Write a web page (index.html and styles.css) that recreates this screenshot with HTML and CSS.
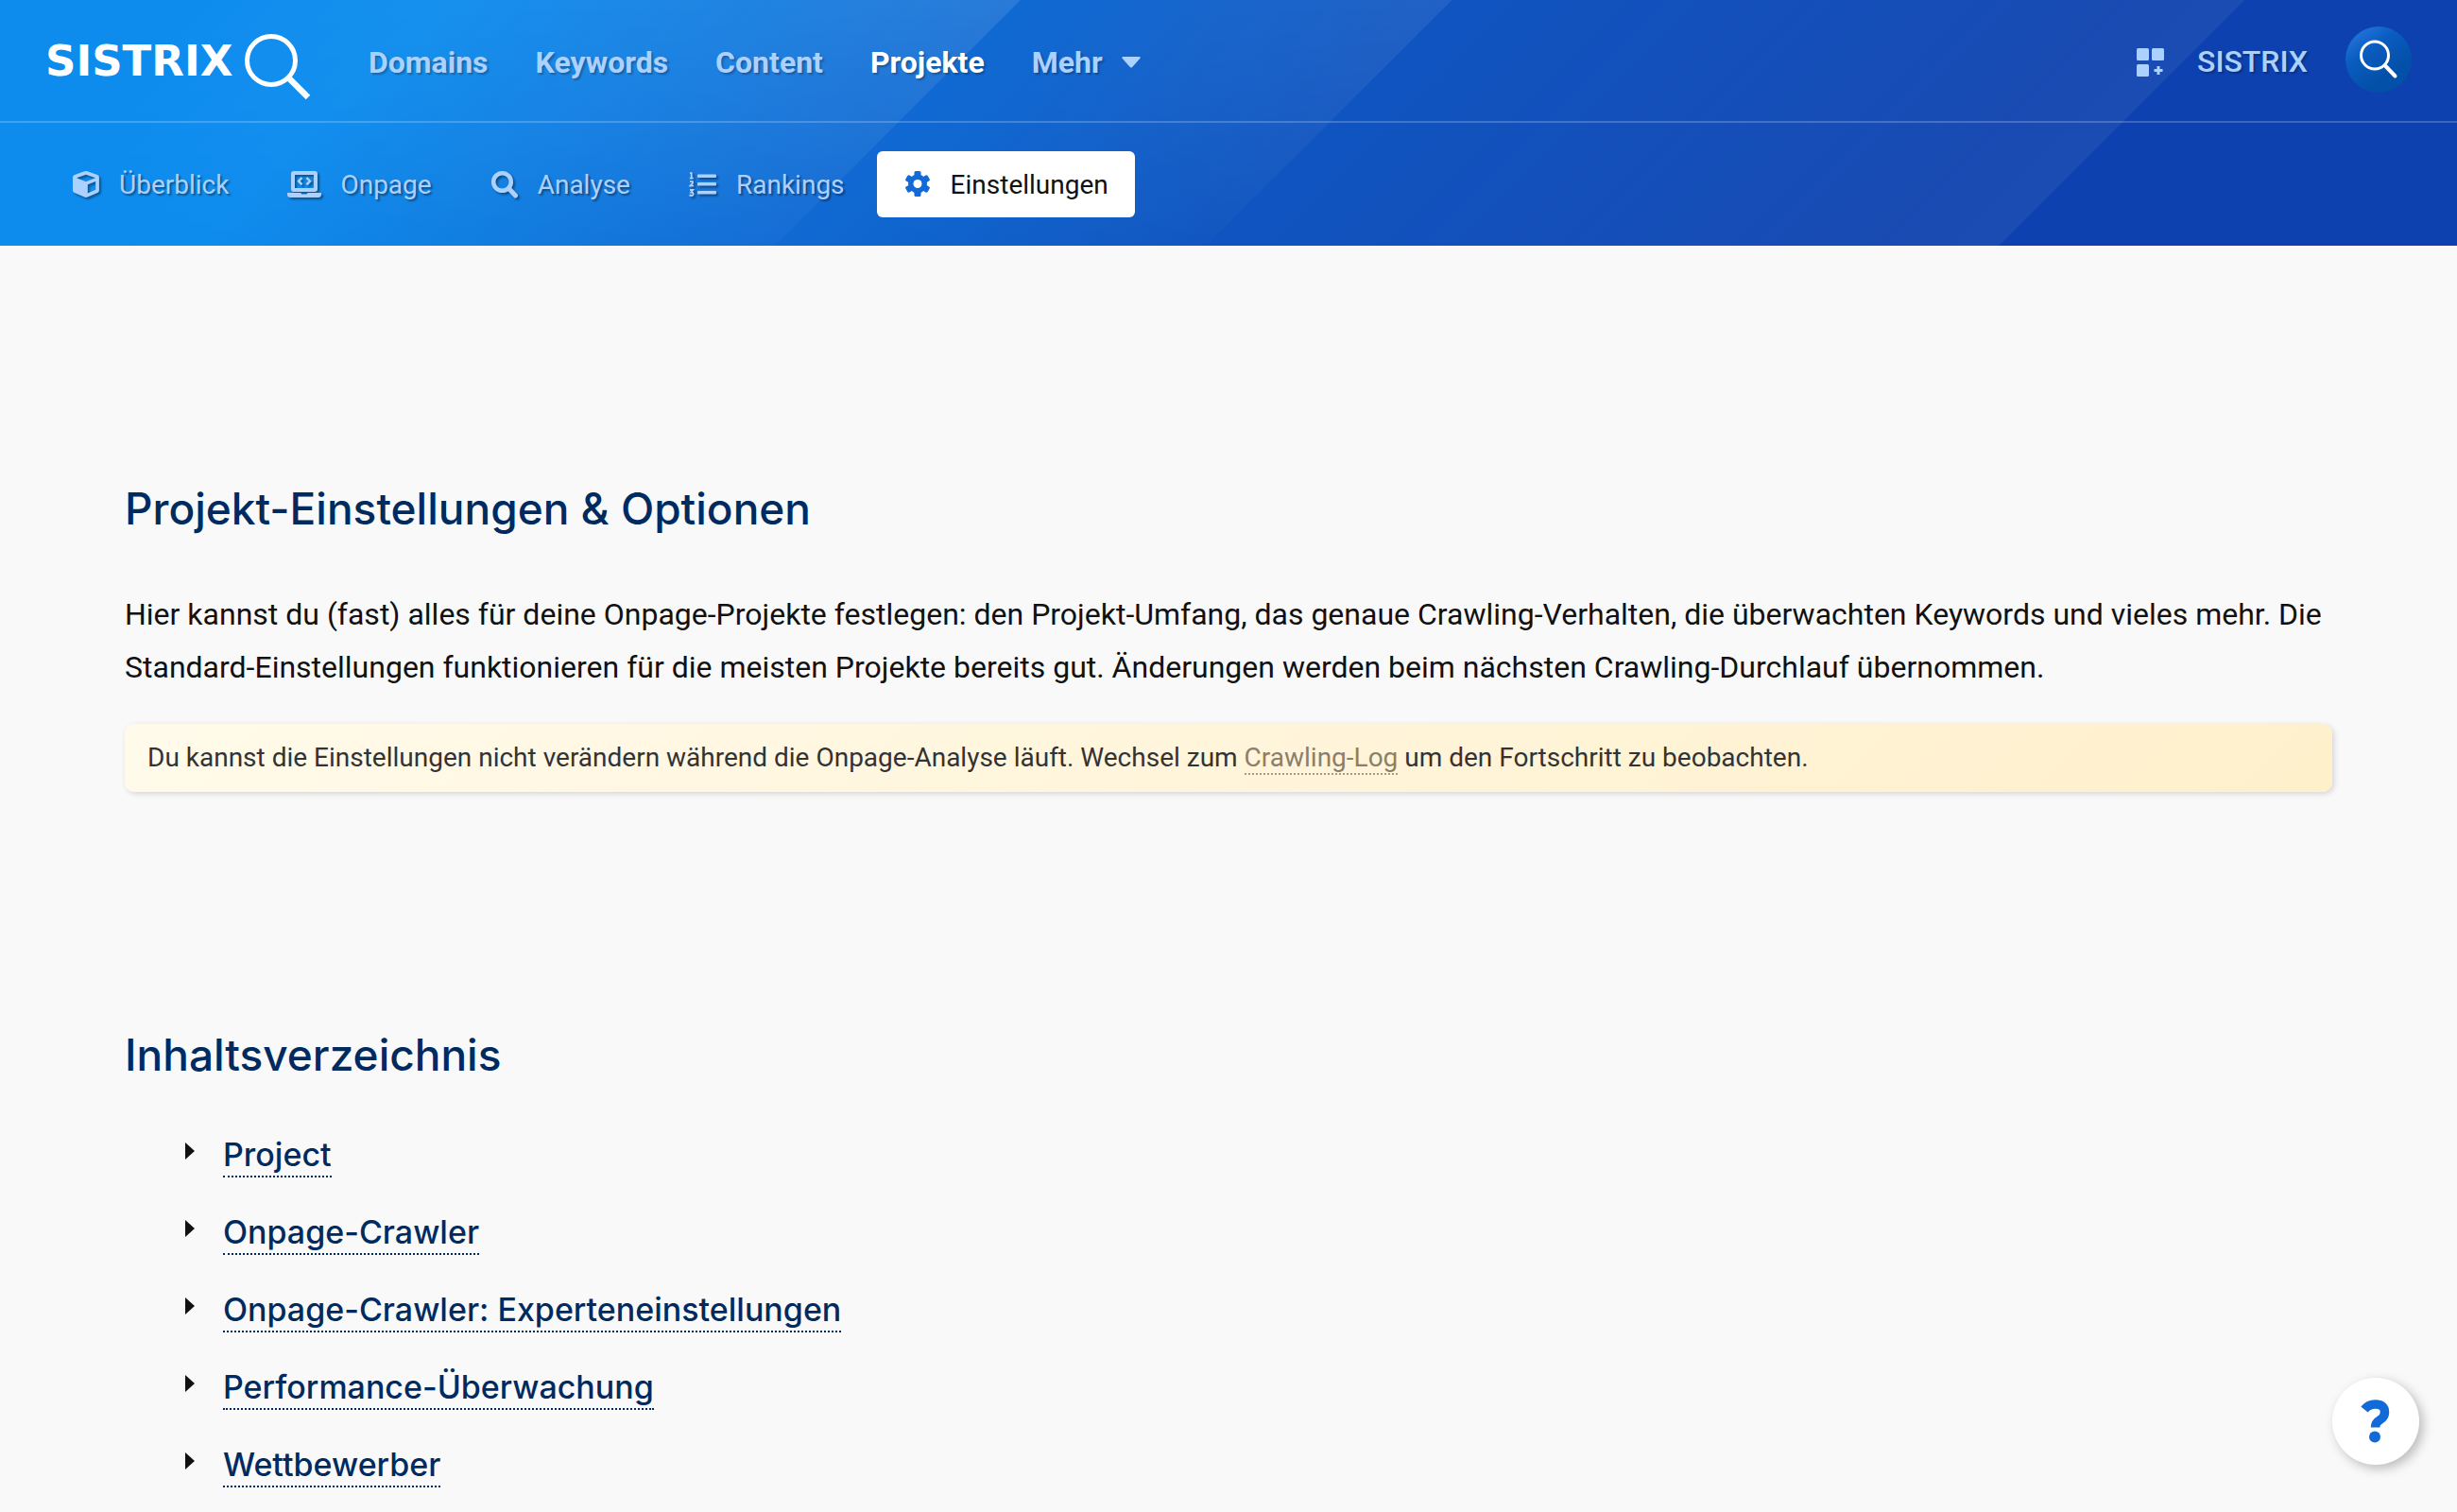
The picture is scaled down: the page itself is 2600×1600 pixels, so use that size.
FILE: index.html
```html
<!DOCTYPE html>
<html lang="de">
<head>
<meta charset="utf-8">
<title>Projekt-Einstellungen – SISTRIX</title>
<link rel="stylesheet" href="styles.css">
</head>
<body>
<header class="header">
  <div class="topbar">
    <a class="logo" href="#" aria-label="SISTRIX">
      <span class="logo-text">SISTRIX</span>
      <svg class="logo-glass" viewBox="0 0 72 72" width="72" height="72"><circle cx="29" cy="29" r="25.500" fill="none" stroke="#fff" stroke-width="5"/><path d="M46.500 46.500 L68 68" stroke="#fff" stroke-width="6.500"/></svg>
    </a>
    <nav class="mainnav">
      <a href="#">Domains</a>
      <a href="#">Keywords</a>
      <a href="#">Content</a>
      <a href="#" class="active">Projekte</a>
      <a href="#" class="more">Mehr <svg class="caret" viewBox="0 0 20 12" width="20" height="12"><path d="M1.500 0h17q2 .3.700 2l-8 9q-1.200 1-2.400 0l-8-9Q-.5.3 1.500 0z" fill="currentColor"/></svg></a>
    </nav>
    <div class="account">
      <button class="icon-button" aria-label="Apps"><svg viewBox="0 0 30 30" width="30" height="30" fill="currentColor"><rect width="13" height="13" rx="1.500"/><rect x="16" width="13" height="13" rx="1.500"/><rect y="17" width="13" height="13" rx="1.500"/><path d="M21.500 19h3v3h3v3h-3v3h-3v-3h-3v-3h3z"/></svg></button>
      <a class="user" href="#">SISTRIX</a>
      <button class="avatar" aria-label="Suche"><svg viewBox="0 0 70 70" width="70" height="70" fill="none" stroke="#fff"><circle cx="31" cy="30.500" r="14.500" stroke-width="3"/><path d="M42 41.500l10.500 11" stroke-width="4" stroke-linecap="round"/></svg></button>
    </div>
  </div>
  <nav class="subnav">
    <a href="#"><svg viewBox="0 0 30 30" width="30" height="30"><path fill="currentColor" fill-rule="evenodd" d="M15 1q.8 0 1.500.3l10.500 3.700q1.900.7 1.900 2.500v14q0 1.700-1.700 2.500l-10.500 4.600q-1.700.7-3.400 0l-10.500-4.600Q1 23.200 1 21.500v-14Q1 5.700 3 5l10.500-3.700Q14.200 1 15 1zM15 4.700L5 8.200v.1L15 12.300l10-4v-.1zM16.800 24.500l8.400-3.700v-8.900l-8.400 3.300z"/></svg>Überblick</a>
    <a href="#"><svg viewBox="0 0 36 30" width="36" height="30"><g fill="none" stroke="currentColor"><rect x="6" y="3" width="24" height="18" rx="1" stroke-width="4"/><path d="M15.500 8l-3.500 3.700 3.500 3.700M20.500 8l3.500 3.700-3.500 3.700" stroke-width="2.500"/></g><path fill="currentColor" d="M0 24h14.500q.3 1.500 1.500 1.500h4q1.200 0 1.500-1.500H36v1.500q0 3.500-3.500 3.500h-29Q0 29 0 25.500z"/></svg>Onpage</a>
    <a href="#"><svg viewBox="0 0 30 30" width="30" height="30"><circle cx="12.500" cy="12.500" r="9.300" fill="none" stroke="currentColor" stroke-width="4.500"/><path d="M19.500 19.500l7 7.500" stroke="currentColor" stroke-width="5" stroke-linecap="round"/></svg>Analyse</a>
    <a href="#"><svg viewBox="0 0 30 30" width="30" height="30"><g fill="currentColor"><rect x="9" y="4.500" width="20" height="3.500" rx="1"/><rect x="9" y="13" width="20" height="3.500" rx="1"/><rect x="9" y="22" width="20" height="3.500" rx="1"/></g><path fill="none" stroke="currentColor" stroke-width="1.800" d="M1 3.200h1.700v5M.8 8.700h4M1 12.200h3v1.500l-2.700 3h3.800M1 21h3.300l-2 2.500q2.300 0 2.300 1.800t-2 1.700q-1.300 0-2-.8"/></svg>Rankings</a>
    <a href="#" class="current"><svg viewBox="0 0 30 30" width="30" height="30"><g fill="currentColor"><rect x="11.500" y="1" width="7" height="27" rx="1.500"/><rect x="11.500" y="1" width="7" height="27" rx="1.500" transform="rotate(60 15 14.500)"/><rect x="11.500" y="1" width="7" height="27" rx="1.500" transform="rotate(120 15 14.500)"/><circle cx="15" cy="14.500" r="10"/></g><circle cx="15" cy="14.500" r="4.500" fill="#fff"/></svg>Einstellungen</a>
  </nav>
</header>
<main class="content">
  <section class="intro">
    <h1>Projekt-Einstellungen &amp; Optionen</h1>
    <p class="lead">Hier kannst du (fast) alles für deine Onpage-Projekte festlegen: den Projekt-Umfang, das genaue Crawling-Verhalten, die überwachten Keywords und vieles mehr. Die Standard-Einstellungen funktionieren für die meisten Projekte bereits gut. Änderungen werden beim nächsten Crawling-Durchlauf übernommen.</p>
    <p class="notice">Du kannst die Einstellungen nicht verändern während die Onpage-Analyse läuft. Wechsel zum <a href="#">Crawling-Log</a> um den Fortschritt zu beobachten.</p>
  </section>
  <section class="toc">
    <h2>Inhaltsverzeichnis</h2>
    <ul>
      <li><a href="#">Project</a></li>
      <li><a href="#">Onpage-Crawler</a></li>
      <li><a href="#">Onpage-Crawler: Experteneinstellungen</a></li>
      <li><a href="#">Performance-Überwachung</a></li>
      <li><a href="#">Wettbewerber</a></li>
    </ul>
  </section>
</main>
<button class="help" aria-label="Hilfe"><svg viewBox="0 0 32 46" width="32" height="46"><path d="M4 10.500Q8.500 5 15.500 5q10 0 10 8.500 0 5-5 8-5 3-5 8" fill="none" stroke="currentColor" stroke-width="9.500"/><circle cx="15" cy="39.500" r="6" fill="currentColor"/></svg></button>
</body>
</html>
```
FILE: styles.css
```css
* { box-sizing: border-box; }
body {
  margin: 0;
  background: #f9f9f9;
  color: #111;
  font-family: Roboto, "Liberation Sans", sans-serif;
}
a { color: inherit; text-decoration: none; }
button { border: 0; padding: 0; background: none; color: inherit; font: inherit; cursor: pointer; }
svg { display: block; flex: none; }

.header {
  position: relative;
  isolation: isolate;
  color: #add1ff;
  background:
    linear-gradient(135deg, transparent 1089px, rgba(255, 255, 255, .06) 1679px, transparent 1680px),
    linear-gradient(135deg, #0d8cee 0, #0d8cee 330px, #106ad3 764px, #0f54c0 1089px, #0d41af 1600px);
}
/* Lighter diagonal bands that end in a sharp edge and fade towards the bottom */
.header::before {
  content: "";
  position: absolute;
  inset: 0;
  z-index: -1;
  background:
    linear-gradient(135deg, transparent 100px, rgba(255, 255, 255, .11) 763px, transparent 764px),
    linear-gradient(135deg, transparent 764px, rgba(255, 255, 255, .08) 1086px, transparent 1087px);
  mask-image: linear-gradient(#000, rgba(0, 0, 0, .2));
}
.topbar {
  display: flex;
  align-items: center;
  height: 130px;
  padding: 0 48px;
  border-bottom: 2px solid rgba(255, 255, 255, .2);
}
.logo { display: flex; align-items: center; gap: 12px; color: #fff; width: 342px; }
.logo-text { padding-top: 2px; font: 700 45px/48px "DejaVu Sans", sans-serif; }
.logo-glass { margin-top: 14px; }
.mainnav { display: flex; gap: 50px; padding-top: 3px; font-size: 32px; font-weight: 700; text-shadow: 2px 2px 2px rgba(0, 0, 0, .25); }
.mainnav .active { color: #fff; }
.more { display: flex; align-items: center; gap: 20px; }
.account { display: flex; align-items: center; gap: 34px; margin-left: auto; font-size: 32px; font-weight: 500; }
.icon-button { padding-top: 4px; }
.user { padding: 2px 6px 0 0; text-shadow: 2px 2px 2px rgba(0, 0, 0, .25); }
.avatar { margin-bottom: 2px; border-radius: 50%; background: linear-gradient(145deg, #2d80e8 0, #0a5cc0 35%, #0350a8 70%); }
.subnav { display: flex; align-items: center; gap: 6px; height: 130px; padding-left: 48px; font-size: 28px; }
.subnav a { display: flex; align-items: center; gap: 20px; height: 70px; padding: 0 28px; border-radius: 6px; text-shadow: 2px 2px 2px rgba(0, 0, 0, .4); }
.subnav svg { filter: drop-shadow(2px 2px 1px rgba(0, 0, 0, .4)); }
.subnav .current { background: #fff; color: #111; text-shadow: none; }
.subnav .current svg { color: #1269d8; filter: none; }

.content { padding: 238px 132px 0; }
h1, h2 { margin: 0; font: 500 46px/80px Inter, sans-serif; color: #002b60; }
.lead { margin: 44px 0 0; font-size: 32px; line-height: 56px; }
.notice { margin: 32px 0 0; padding: 0 24px; font-size: 28px; line-height: 72px; color: #333; border-radius: 10px; background: linear-gradient(135deg, #fffaea, #fff0cc); box-shadow: 2px 2px 6px rgba(0, 0, 0, .15); }
.notice a { color: #8a8069; border-bottom: 2px dotted #a89c80; }
.toc { margin-top: 238px; }
.toc ul { list-style: none; margin: 26px 0 0; padding: 0 0 0 64px; }
.toc li { display: flex; align-items: center; height: 82px; font: 500 34px/44px Inter, sans-serif; color: #002b60; }
.toc li::before { content: ""; margin: 0 30px 10px 0; border: 9px solid transparent; border-left: 10px solid #111; border-right: 0; }
.toc a { border-bottom: 2px dotted #002b60; }
.help { position: fixed; right: 40px; bottom: 50px; display: flex; align-items: center; justify-content: center; width: 92px; height: 92px; border-radius: 50%; background: #fff; color: #1269d8; box-shadow: 4px 4px 12px rgba(0, 0, 0, .25); }
```
